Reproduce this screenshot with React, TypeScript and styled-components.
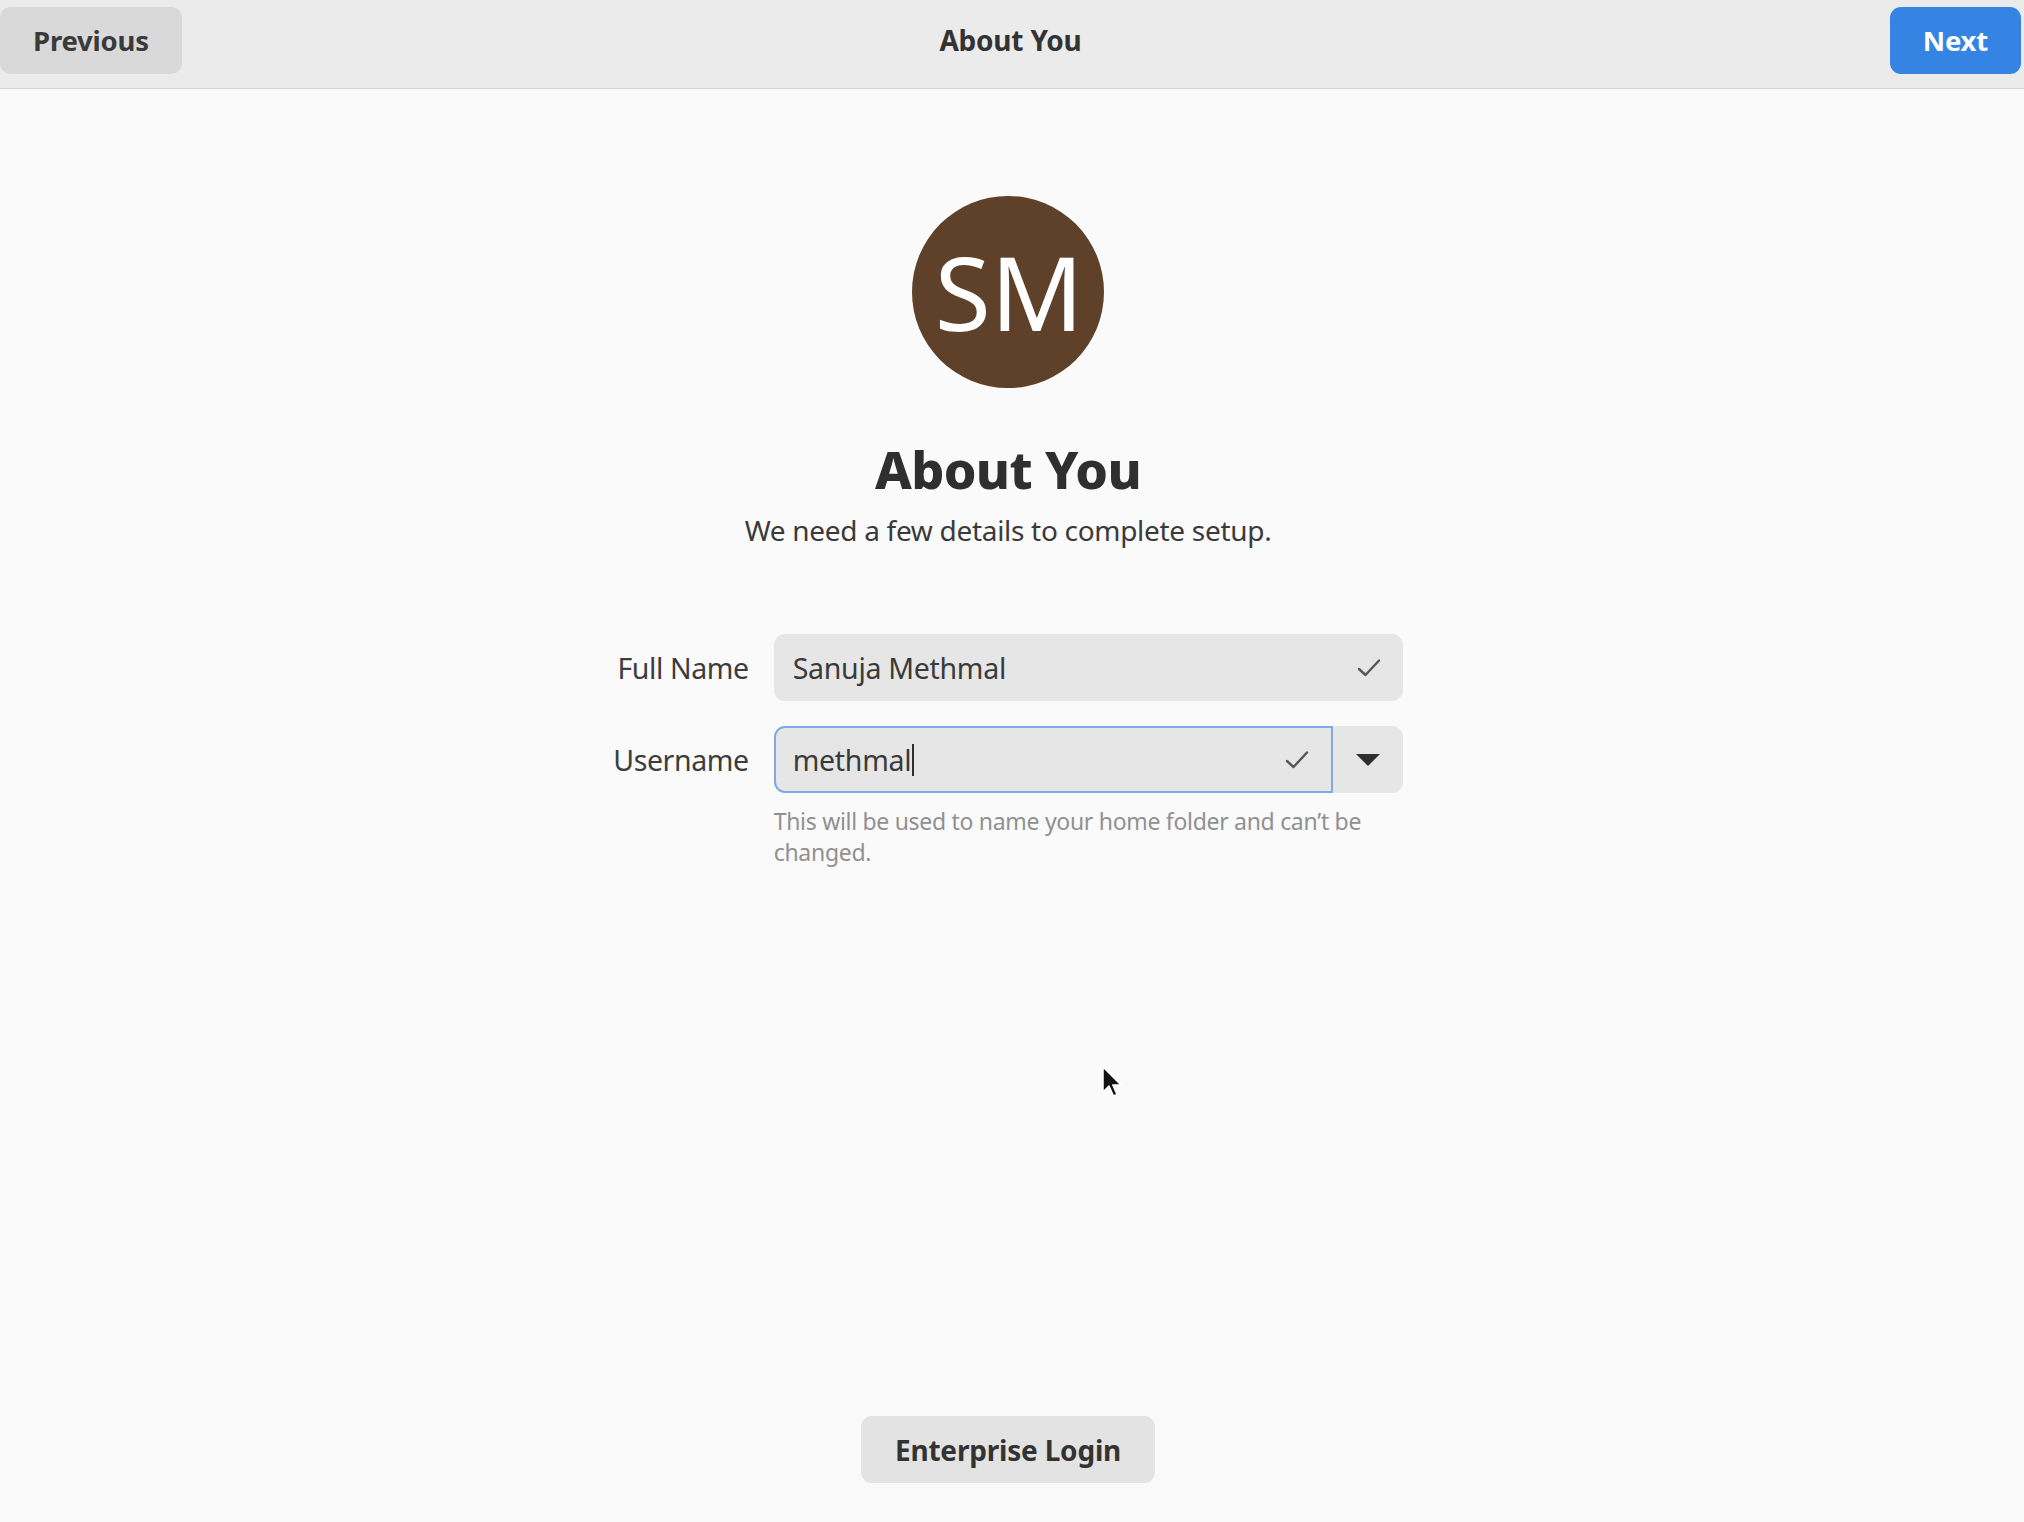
import React from "react";
import styled, { createGlobalStyle } from "styled-components";

const Global = createGlobalStyle`
  html, body { margin: 0; padding: 0; }
  body {
    background: #fafafa;
    font-family: "Noto Sans", "DejaVu Sans", sans-serif;
    color: #2e2e2e;
  }
  #root { min-height: 100vh; }
`;

const Window = styled.div`
  position: relative;
  display: flex;
  flex-direction: column;
  width: 2024px;
  height: 1522px;
  overflow: hidden;
  background: #fafafa;
`;

const HeaderBar = styled.header`
  flex: 0 0 auto;
  height: 88px;
  display: grid;
  grid-template-columns: 1fr auto 1fr;
  align-items: center;
  padding: 0 3px 0 0;
  background: #ebebeb;
  border-bottom: 1px solid #d6d6d6;
  box-sizing: content-box;
`;

const HeaderButton = styled.button<{ $primary?: boolean; $align: "start" | "end" }>`
  justify-self: ${(p) => p.$align};
  height: 67px;
  padding: 0 33px;
  margin-top: -8px;
  border: none;
  border-radius: 11px;
  background: ${(p) => (p.$primary ? "#3584e4" : "#d9d9d9")};
  color: ${(p) => (p.$primary ? "#ffffff" : "#3a3a3a")};
  font-family: "Noto Sans", sans-serif;
  font-weight: 700;
  font-size: 27.5px;
  letter-spacing: -0.2px;
  cursor: pointer;
`;

const HeaderTitle = styled.h1`
  margin: 0;
  margin-top: -8px;
  font-size: 28px;
  font-weight: 700;
  letter-spacing: -0.2px;
  color: #333333;
`;

const Content = styled.main`
  flex: 1 1 auto;
  display: flex;
  flex-direction: column;
  align-items: center;
  padding: 107px 8px 0 0;
`;

const Avatar = styled.div`
  width: 192px;
  height: 192px;
  border-radius: 50%;
  background: #5f4129;
  color: #ffffff;
  display: flex;
  align-items: center;
  justify-content: center;
  font-size: 102px;
  font-weight: 400;
  letter-spacing: 0;
  line-height: 1;
  padding-left: 2px;
  box-sizing: border-box;
`;

const Heading = styled.h2`
  margin: 49px 0 0;
  font-size: 52px;
  line-height: 64px;
  font-weight: 800;
  color: #2f2f2f;
  letter-spacing: -0.6px;
`;

const Subtitle = styled.p`
  margin: 10px 0 0;
  font-size: 28px;
  line-height: 38px;
  color: #3a3a3a;
  letter-spacing: -0.3px;
`;

const Form = styled.div`
  margin-top: 85px;
  display: grid;
  grid-template-columns: auto 629px;
  column-gap: 25px;
  row-gap: 25px;
  align-items: center;
`;

const Label = styled.label`
  justify-self: end;
  font-size: 28.5px;
  color: #3c3c3c;
  letter-spacing: -0.4px;
`;

const FieldGroup = styled.div`
  display: flex;
  height: 67px;
`;

const Entry = styled.div<{ $focused?: boolean; $linked?: boolean }>`
  flex: 1 1 auto;
  display: flex;
  align-items: center;
  box-sizing: border-box;
  height: 67px;
  padding: 0 22px 0 ${(p) => (p.$focused ? "17px" : "19px")};
  background: #e6e6e6;
  border: ${(p) => (p.$focused ? "2px solid #7faae3" : "none")};
  border-radius: ${(p) => (p.$linked ? "11px 0 0 11px" : "11px")};
  font-size: 28.5px;
  color: #3a3a3a;
  letter-spacing: -0.3px;
`;

const EntryText = styled.span`
  flex: 1 1 auto;
  display: flex;
  align-items: center;
`;

const Caret = styled.span`
  display: inline-block;
  width: 2px;
  height: 32px;
  margin-left: 1px;
  background: #2e2e2e;
`;

const DropButton = styled.button`
  flex: 0 0 70px;
  height: 67px;
  border: none;
  border-radius: 0 11px 11px 0;
  background: #e6e6e6;
  display: flex;
  align-items: center;
  justify-content: center;
  padding: 0;
`;

const Hint = styled.p`
  grid-column: 2;
  margin: -12px 0 0;
  font-size: 23px;
  line-height: 31px;
  color: #909090;
  letter-spacing: -0.3px;
`;

const Footer = styled.footer`
  flex: 0 0 auto;
  display: flex;
  justify-content: center;
  padding: 0 8px 39px 0;
`;

const FooterButton = styled.button`
  height: 67px;
  padding: 0 34px;
  border: none;
  border-radius: 11px;
  background: #e3e3e3;
  color: #333333;
  font-family: "Noto Sans", sans-serif;
  font-weight: 700;
  font-size: 28px;
  letter-spacing: -0.2px;
`;

const Pointer = styled.svg`
  position: absolute;
  left: 1101px;
  top: 1066px;
  pointer-events: none;
`;

const Check = () => (
  <svg width="24" height="20" viewBox="0 0 24 20" fill="none">
    <path d="M2 11 L8.5 17 L22 2.5" stroke="#575757" strokeWidth="2.4" strokeLinecap="round" strokeLinejoin="round" />
  </svg>
);

const Triangle = () => (
  <svg width="24" height="12" viewBox="0 0 24 12">
    <path d="M0 0 H24 L12 12 Z" fill="#2e2e2e" />
  </svg>
);

export default function App() {
  return (
    <>
      <Global />
      <Window>
        <HeaderBar>
          <HeaderButton $align="start">Previous</HeaderButton>
          <HeaderTitle>About You</HeaderTitle>
          <HeaderButton $align="end" $primary>
            Next
          </HeaderButton>
        </HeaderBar>
        <Content>
          <Avatar>SM</Avatar>
          <Heading>About You</Heading>
          <Subtitle>We need a few details to complete setup.</Subtitle>
          <Form>
            <Label>Full Name</Label>
            <Entry>
              <EntryText>Sanuja Methmal</EntryText>
              <Check />
            </Entry>
            <Label>Username</Label>
            <FieldGroup>
              <Entry $focused $linked>
                <EntryText>
                  methmal
                  <Caret />
                </EntryText>
                <Check />
              </Entry>
              <DropButton aria-label="More">
                <Triangle />
              </DropButton>
            </FieldGroup>
            <Hint>This will be used to name your home folder and can’t be changed.</Hint>
          </Form>
        </Content>
        <Footer>
          <FooterButton>Enterprise Login</FooterButton>
        </Footer>
        <Pointer width="22" height="34" viewBox="0 0 22 34">
          <path d="M2 1 L2 26 L8 20 L12.5 30 L16 28.5 L11.8 19 L20 19 Z" fill="#111" stroke="#ffffff" strokeWidth="1.5" strokeLinejoin="round" />
        </Pointer>
      </Window>
    </>
  );
}
